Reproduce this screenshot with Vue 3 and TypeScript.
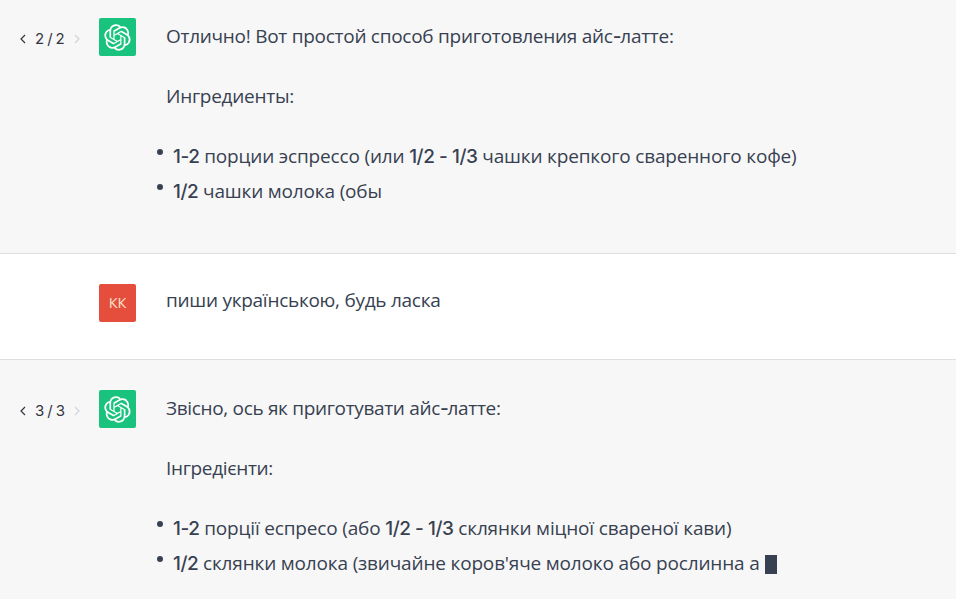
<script setup lang="ts">
interface Run { text: string; latin?: boolean }
interface Message {
  id: number
  author: 'assistant' | 'user'
  page?: string
  paragraphs: Run[][]
  items?: Run[][]
  typing?: boolean
}

const messages: Message[] = [
  {
    id: 1,
    author: 'assistant',
    page: '2 / 2',
    paragraphs: [
      [
        { text: 'Отлично! Вот простой способ приготовления айс' },
        { text: '-', latin: true },
        { text: 'латте:' },
      ],
      [{ text: 'Ингредиенты:' }],
    ],
    items: [
      [
        { text: '1-2', latin: true },
        { text: ' порции эспрессо (или ' },
        { text: '1/2 - 1/3', latin: true },
        { text: ' чашки крепкого сваренного кофе)' },
      ],
      [{ text: '1/2', latin: true }, { text: ' чашки молока (обы' }],
    ],
  },
  { id: 2, author: 'user', paragraphs: [[{ text: 'пиши українською, будь ласка' }]] },
  {
    id: 3,
    author: 'assistant',
    page: '3 / 3',
    paragraphs: [
      [
        { text: 'Звісно, ось як приготувати айс' },
        { text: '-', latin: true },
        { text: 'латте:' },
      ],
      [{ text: 'Інгредієнти:' }],
    ],
    items: [
      [
        { text: '1-2', latin: true },
        { text: ' порції еспресо (або ' },
        { text: '1/2 - 1/3', latin: true },
        { text: ' склянки міцної свареної кави)' },
      ],
      [
        { text: '1/2', latin: true },
        { text: " склянки молока (звичайне коров'яче молоко або рослинна а" },
      ],
    ],
    typing: true,
  },
]
</script>

<template>
  <main class="chat">
    <article v-for="m in messages" :key="m.id" class="message" :class="m.author">
      <div class="side">
        <nav v-if="m.page" class="pager">
          <svg class="chevron" viewBox="0 0 6 10"><path d="M5 1 1 5l4 4" /></svg>
          <span class="page">{{ m.page }}</span>
          <svg class="chevron disabled" viewBox="0 0 6 10"><path d="m1 1 4 4-4 4" /></svg>
        </nav>
      </div>
      <div class="avatar">
        <svg v-if="m.author === 'assistant'" class="logo" viewBox="0 0 41 41">
          <path d="M37.532 16.87a9.963 9.963 0 0 0-.856-8.184 10.078 10.078 0 0 0-10.855-4.835A9.964 9.964 0 0 0 18.306.5a10.079 10.079 0 0 0-9.614 6.977 9.967 9.967 0 0 0-6.664 4.834 10.08 10.08 0 0 0 1.24 11.817 9.965 9.965 0 0 0 .856 8.185 10.079 10.079 0 0 0 10.855 4.835 9.965 9.965 0 0 0 7.516 3.35 10.078 10.078 0 0 0 9.617-6.981 9.967 9.967 0 0 0 6.663-4.834 10.079 10.079 0 0 0-1.243-11.813ZM22.498 37.886a7.474 7.474 0 0 1-4.799-1.735c.061-.033.168-.091.237-.134l7.964-4.6a1.294 1.294 0 0 0 .655-1.134V19.054l3.366 1.944a.12.12 0 0 1 .066.092v9.299a7.505 7.505 0 0 1-7.49 7.496ZM6.392 31.006a7.471 7.471 0 0 1-.894-5.023c.06.036.162.099.237.141l7.964 4.6a1.297 1.297 0 0 0 1.308 0l9.724-5.614v3.888a.12.12 0 0 1-.048.103l-8.051 4.649a7.504 7.504 0 0 1-10.24-2.744ZM4.297 13.62A7.469 7.469 0 0 1 8.2 10.333c0 .068-.004.19-.004.274v9.201a1.294 1.294 0 0 0 .654 1.132l9.723 5.614-3.366 1.944a.12.12 0 0 1-.114.01L7.04 23.856a7.504 7.504 0 0 1-2.743-10.237Zm27.658 6.437-9.724-5.615 3.367-1.943a.121.121 0 0 1 .113-.01l8.052 4.648a7.498 7.498 0 0 1-1.158 13.528v-9.476a1.293 1.293 0 0 0-.65-1.132Zm3.35-5.043c-.059-.037-.162-.099-.236-.141l-7.965-4.6a1.298 1.298 0 0 0-1.308 0l-9.723 5.614v-3.888a.12.12 0 0 1 .048-.103l8.05-4.645a7.497 7.497 0 0 1 11.135 7.763Zm-21.063 6.929-3.367-1.944a.12.12 0 0 1-.065-.092v-9.299a7.497 7.497 0 0 1 12.293-5.756 6.94 6.94 0 0 0-.236.134l-7.965 4.6a1.294 1.294 0 0 0-.654 1.132l-.006 11.225Zm1.829-3.943 4.33-2.501 4.332 2.5v5l-4.331 2.5-4.331-2.5V18Z" />
        </svg>
        <span v-else>КК</span>
      </div>
      <div class="body">
        <p v-for="(runs, i) in m.paragraphs" :key="i">
          <span v-for="(r, j) in runs" :key="j" :class="{ latin: r.latin }">{{ r.text }}</span>
        </p>
        <ul v-if="m.items">
          <li v-for="(runs, i) in m.items" :key="i">
            <span class="dot" />
            <div class="line">
              <span v-for="(r, j) in runs" :key="j" :class="{ latin: r.latin }">{{ r.text }}</span>
            </div>
            <span v-if="m.typing && i === m.items.length - 1" class="cursor" />
          </li>
        </ul>
      </div>
    </article>
  </main>
</template>

<style>
body { margin: 0; background: #f7f7f8; }
</style>

<style scoped>
.chat {
  height: 599px;
  overflow: hidden;
  display: grid;
  grid-template-rows: 254px 106px 239px;
  color: #374151;
  font-family: "Open Sans", "Noto Sans", sans-serif;
  font-size: 19px;
  letter-spacing: -0.27px;
  line-height: 35px;
}
.message {
  box-sizing: border-box;
  display: flex;
  padding-top: 30px;
  border-bottom: 1px solid #dfdfe0;
  background: #f7f7f7;
}
.message:first-child { padding-top: 18px; }
.message:last-child {
  border-bottom: 0;
  letter-spacing: -0.33px;
}
.message.user { background: #fff; }
.side { width: 99px; flex: none; }
.pager {
  display: flex;
  align-items: center;
  height: 41px;
  padding-left: 20px;
  color: #343541;
}
.page {
  width: 30px;
  margin: 0 9px;
  padding-top: 1px;
  font: 15px/20px Inter, sans-serif;
  letter-spacing: 0.2px;
  word-spacing: -1.6px;
  white-space: nowrap;
}
.chevron {
  width: 6px;
  height: 10px;
  fill: none;
  stroke: currentColor;
  stroke-width: 1.2;
}
.disabled { color: #d3d4d8; }
.avatar {
  flex: none;
  display: flex;
  align-items: center;
  justify-content: center;
  width: 37px;
  height: 38px;
  margin-right: 30px;
  border-radius: 2px;
  background: #19c37d;
  color: #fff;
}
.user .avatar {
  background: #e54d3c;
  color: #f8e3cc;
  font-size: 14.5px;
  line-height: 20px;
  letter-spacing: 0;
}
.user .avatar span { padding-bottom: 1px; }
.logo { width: 27px; height: 27px; fill: currentColor; }
.body { padding-top: 1px; white-space: nowrap; }
.user .body { padding-top: 0; margin-top: -1px; }
p { margin: 0 0 25px; }
ul {
  list-style: none;
  margin: 0 0 0 -9px;
  padding: 0;
  letter-spacing: -0.17px;
}
li { display: flex; }
.dot {
  width: 6px;
  height: 6px;
  margin: 10px 10px 0 0;
  border-radius: 50%;
  background: #374151;
}
.line { white-space: pre; }
.latin {
  font-family: Inter, sans-serif;
  font-weight: 450;
  letter-spacing: -0.45px;
}
p .latin { letter-spacing: -1.2px; }
.cursor {
  width: 12px;
  height: 19px;
  margin: 9px 0 0 5px;
  background: #374151;
}
</style>
